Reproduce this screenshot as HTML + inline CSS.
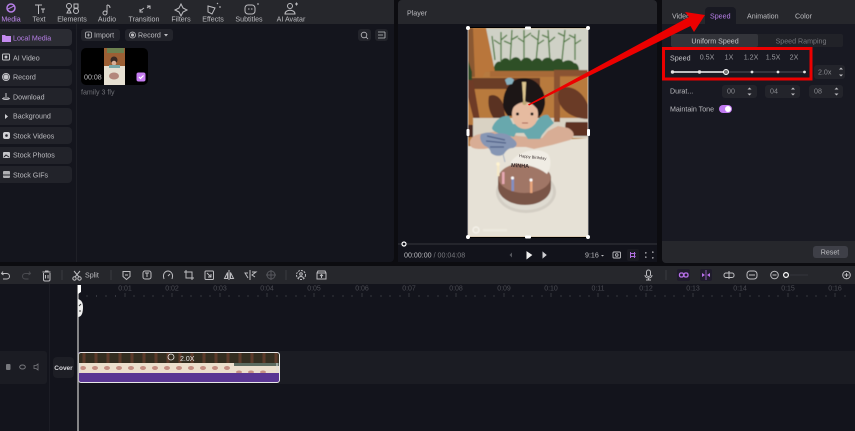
<!DOCTYPE html>
<html><head><meta charset="utf-8">
<style>
html,body{margin:0;padding:0;width:855px;height:431px;overflow:hidden;background:#0c0c10}
#w{position:absolute;left:0;top:0;width:855px;height:431px;overflow:hidden;background:#0c0c10;font-family:"Liberation Sans",sans-serif;font-size:7.1px;color:#bcbcc0;filter:blur(.3px)}
.a{position:absolute}
.t{position:absolute;white-space:nowrap;line-height:10px;transform:translateY(-4.5px)}
.c{transform:translate(-50%,-4.5px)}
.r{color:#4b4c53;font-size:7px}
.side{position:absolute;left:0;width:72px;height:17px;background:#22232a;border-radius:0 4px 4px 0}
.box{position:absolute;background:#23242b;border-radius:3px}
svg{position:absolute;left:0;top:0}
</style></head><body><div id="w">
<!-- panels -->
<div class="a" style="left:0;top:0;width:394px;height:262px;background:#14151d;border-radius:0 0 4px 0"></div>
<div class="a" style="left:0;top:0;width:394px;height:24px;background:#26272c"></div>
<div class="a" style="left:76px;top:24px;width:1px;height:238px;background:#1f2027"></div>
<div class="a" style="left:398px;top:0;width:259px;height:262px;background:#12131b;border-radius:4px 4px 0 0"></div>
<div class="a" style="left:398px;top:0;width:259px;height:24px;background:#26272c;border-radius:4px 4px 0 0"></div>
<div class="a" style="left:398px;top:243px;width:259px;height:2px;background:#24252c"></div>
<div class="a" style="left:662px;top:0;width:193px;height:263px;background:#181922;border-radius:4px 0 0 4px"></div>
<div class="a" style="left:662px;top:0;width:193px;height:24px;background:#26272c"></div>
<div class="a" style="left:662px;top:241px;width:193px;height:22px;background:#26272c;border-radius:0 0 0 4px"></div>
<div class="a" style="left:0;top:266px;width:855px;height:18px;background:#26272c"></div>
<div class="a" style="left:0;top:284px;width:855px;height:147px;background:#13141c"></div>
<div class="a" style="left:49px;top:284px;width:1px;height:147px;background:#1c1d25"></div>
<div class="a" style="left:0;top:351px;width:47px;height:33px;background:#1b1c23;border-radius:0 3px 3px 0"></div>
<div class="a" style="left:278px;top:351px;width:577px;height:33px;background:#1b1c23"></div>

<!-- top tabs -->
<div class="t c" style="left:11px;top:19px;color:#c08bf0">Media</div>
<div class="t c" style="left:39px;top:19px">Text</div>
<div class="t c" style="left:72px;top:19px">Elements</div>
<div class="t c" style="left:107px;top:19px">Audio</div>
<div class="t c" style="left:144px;top:19px">Transition</div>
<div class="t c" style="left:181px;top:19px">Filters</div>
<div class="t c" style="left:213px;top:19px">Effects</div>
<div class="t c" style="left:249px;top:19px">Subtitles</div>
<div class="t c" style="left:291px;top:19px">AI Avatar</div>

<!-- sidebar -->
<div class="side" style="top:29px;background:#2b2c33"></div>
<div class="side" style="top:49px"></div>
<div class="side" style="top:69px"></div>
<div class="side" style="top:88px"></div>
<div class="side" style="top:108px"></div>
<div class="side" style="top:127px"></div>
<div class="side" style="top:147px"></div>
<div class="side" style="top:166px"></div>
<div class="t" style="left:13px;top:38px;color:#b77fe8">Local Media</div>
<div class="t" style="left:13px;top:58px">AI Video</div>
<div class="t" style="left:13px;top:77px">Record</div>
<div class="t" style="left:13px;top:97px">Download</div>
<div class="t" style="left:13px;top:116px">Background</div>
<div class="t" style="left:13px;top:136px">Stock Videos</div>
<div class="t" style="left:13px;top:155px">Stock Photos</div>
<div class="t" style="left:13px;top:175px">Stock GIFs</div>

<!-- media -->
<div class="box" style="left:81px;top:29px;width:39px;height:12px"></div>
<div class="box" style="left:125px;top:29px;width:48px;height:12px"></div>
<div class="t" style="left:94px;top:35px">Import</div>
<div class="t" style="left:138px;top:35px">Record</div>
<div class="box" style="left:358px;top:29px;width:13px;height:12px"></div>
<div class="box" style="left:375px;top:29px;width:13px;height:12px"></div>
<div class="a" style="left:81px;top:48px;width:67px;height:37px;background:#000;border-radius:5px"></div>
<div class="t" style="left:84px;top:77px">00:08</div>
<div class="t" style="left:81px;top:92px;color:#6f7076">family 3 fly</div>

<!-- player text -->
<div class="t" style="left:407px;top:13px">Player</div>
<div class="t" style="left:404px;top:255px">00:00:00 <span style="color:#77787d">/ 00:04:08</span></div>
<div class="t" style="left:585px;top:255px">9:16</div>

<!-- right panel -->
<div class="a" style="left:705px;top:7px;width:31px;height:17px;background:#181922;border-radius:4px 4px 0 0"></div>
<div class="t" style="left:672px;top:16px">Video</div>
<div class="t" style="left:710px;top:16px;color:#b77fe8">Speed</div>
<div class="t" style="left:747px;top:16px">Animation</div>
<div class="t" style="left:795px;top:16px">Color</div>
<div class="a" style="left:671px;top:34px;width:172px;height:13px;background:#212228;border-radius:2px"></div>
<div class="a" style="left:671px;top:34px;width:87px;height:13px;background:#33343a;border-radius:2px"></div>
<div class="t c" style="left:715px;top:41px;color:#c4c4c8">Uniform Speed</div>
<div class="t c" style="left:801px;top:41px;color:#77787d">Speed Ramping</div>
<div class="t" style="left:670px;top:58px;color:#c4c4c8">Speed</div>
<div class="t c" style="left:707px;top:57px;color:#9a9ba0">0.5X</div>
<div class="t c" style="left:729px;top:57px;color:#9a9ba0">1X</div>
<div class="t c" style="left:751px;top:57px;color:#9a9ba0">1.2X</div>
<div class="t c" style="left:773px;top:57px;color:#9a9ba0">1.5X</div>
<div class="t c" style="left:794px;top:57px;color:#9a9ba0">2X</div>
<div class="box" style="left:814px;top:65px;width:31px;height:14px"></div>
<div class="t" style="left:818px;top:72px;color:#8a8b90">2.0x</div>
<div class="t" style="left:670px;top:91px">Durat...</div>
<div class="box" style="left:722px;top:85px;width:35px;height:13px"></div>
<div class="box" style="left:765px;top:85px;width:35px;height:13px"></div>
<div class="box" style="left:809px;top:85px;width:34px;height:13px"></div>
<div class="t" style="left:727px;top:91px;color:#8a8b90">00</div>
<div class="t" style="left:770px;top:91px;color:#8a8b90">04</div>
<div class="t" style="left:814px;top:91px;color:#8a8b90">08</div>
<div class="t" style="left:670px;top:109px">Maintain Tone</div>
<div class="a" style="left:813px;top:246px;width:35px;height:12px;background:#3e3f47;border-radius:3px"></div>
<div class="t c" style="left:830px;top:252px">Reset</div>

<!-- toolbar text -->
<div class="t" style="left:85px;top:275px">Split</div>

<!-- ruler labels -->
<div class="t c r" style="left:125px;top:289px">0:01</div>
<div class="t c r" style="left:172px;top:289px">0:02</div>
<div class="t c r" style="left:220px;top:289px">0:03</div>
<div class="t c r" style="left:267px;top:289px">0:04</div>
<div class="t c r" style="left:314px;top:289px">0:05</div>
<div class="t c r" style="left:362px;top:289px">0:06</div>
<div class="t c r" style="left:409px;top:289px">0:07</div>
<div class="t c r" style="left:456px;top:289px">0:08</div>
<div class="t c r" style="left:504px;top:289px">0:09</div>
<div class="t c r" style="left:551px;top:289px">0:10</div>
<div class="t c r" style="left:598px;top:289px">0:11</div>
<div class="t c r" style="left:646px;top:289px">0:12</div>
<div class="t c r" style="left:693px;top:289px">0:13</div>
<div class="t c r" style="left:740px;top:289px">0:14</div>
<div class="t c r" style="left:788px;top:289px">0:15</div>
<div class="t c r" style="left:835px;top:289px">0:16</div>

<!-- track head -->
<div class="a" style="left:53px;top:357px;width:21px;height:21px;background:#1d1e25;border-radius:4px"></div>

<svg width="855" height="431" viewBox="0 0 855 431" fill="none">
<defs>
<filter id="b"><feGaussianBlur stdDeviation="0.6"/></filter>
<clipPath id="ph"><rect x="468" y="28" width="120" height="209"/></clipPath>
<clipPath id="th"><rect x="104" y="48" width="21" height="37"/></clipPath>
</defs>

<!-- top icons -->
<g stroke="#bdbdc1" stroke-width="1" fill="none">
<circle cx="11" cy="8" r="4" stroke="#b77fe8" stroke-width="1.5"/><path d="M8 9l6-3" stroke="#b77fe8"/>
<path d="M35 5h7M38.500 5v9M41 9h4M43 9v4"/>
<circle cx="69" cy="6" r="2.500"/><rect x="74" y="4" width="4" height="4"/><path d="M67 13l2-4 2 4z"/><circle cx="76" cy="11" r="2.500"/>
<path d="M107 5v8"/><circle cx="105" cy="13" r="2"/><path d="M107 5c2 0 3 1 3 3"/>
<path d="M140 11l4-3M147 8l3-2M140 9v3h3M147 6h3v3" />
<path d="M181 4l2 4 4 2-4 2-2 4-2-4-4-2 4-2z"/>
<path d="M208 6l7 2-3 6-4-2zM217 4l1-1M219 7h2"/>
<rect x="245" y="5" width="10" height="9" rx="3"/><path d="M248 9h1.500M251 9h1.500M257 4h2"/>
<circle cx="290" cy="6" r="2.500"/><path d="M285 14c0-5 10-5 10 0z"/><path d="M295 4h3M296.500 2.500v3"/>
</g>

<!-- sidebar icons -->
<path d="M2 35h3l1 1h5v6H2z" fill="#c48bf0"/>
<g stroke="#c4c4c8" stroke-width="1">
<rect x="2.500" y="54" width="7" height="6" rx="1"/><circle cx="6" cy="57" r="1" fill="#c4c4c8"/>
<circle cx="6" cy="77" r="3.500"/><circle cx="6" cy="77" r="2" fill="#c4c4c8"/>
<path d="M6 93v4M3 98h6" /><path d="M2.500 98c0 2 7 2 7 0"/>
</g>
<path d="M5 114l3 2.500-3 2.500z" fill="#d0d0d4"/>
<rect x="3" y="132" width="7" height="7" rx="2" fill="#d0d0d4"/><circle cx="6.500" cy="135.500" r="1.300" fill="#22232a"/>
<rect x="3" y="152" width="7" height="6" rx="1" fill="#c4c4c8"/><path d="M4 157l2-2 3 2" stroke="#22232a"/>
<rect x="3" y="171" width="7" height="7" rx="1" fill="#b0b0b4"/><path d="M3 175h7" stroke="#22232a"/>

<!-- media controls -->
<g stroke="#bdbdc1" stroke-width="0.8">
<rect x="85.500" y="32" width="6" height="6" rx="1.500"/><path d="M88.500 33.500v3M87 35h3"/>
<circle cx="132.500" cy="35" r="3"/><circle cx="132.500" cy="35" r="1.200" fill="#bdbdc1"/>
<circle cx="364" cy="35" r="2.800"/><path d="M366 37l2 2"/>
<path d="M378 32h7M378 35h5M378 38h7M385 32v6"/>
</g>
<path d="M164 34h4l-2 2.500z" fill="#bdbdc1"/>

<!-- thumbnail -->
<g clip-path="url(#th)">
<rect x="104" y="48" width="21" height="37" fill="#e6e0d2"/>
<rect x="104" y="48" width="21" height="18" fill="#9c5f34"/>
<rect x="107" y="48" width="17" height="5" fill="#6d8150"/>
<circle cx="114" cy="60" r="3.500" fill="#3a2a24"/><circle cx="114" cy="63" r="2.300" fill="#d9ae96"/><rect x="109" y="65" width="11" height="3" fill="#7aa6a6"/>
<ellipse cx="114" cy="76" rx="5" ry="3.500" fill="#b3877c"/>
</g>
<rect x="136.500" y="72.500" width="9" height="9" rx="2" fill="#c77df2"/>
<path d="M139 77l1.500 1.500 3-3" stroke="#fff" stroke-width="1.200"/>

<!-- photo -->
<g clip-path="url(#ph)">
<rect x="468" y="28" width="120" height="209" fill="#b67a40"/>
<g filter="url(#b)">
<!-- bamboo wall -->
<rect x="486" y="28" width="102" height="44" fill="#cfd1c6"/>
<g stroke="#4f7a42" stroke-width="1.300">
<path d="M495 60l-3-24M501 62V32M500 44l-6-4M501 40l6-5M510 64l2-34M511 44l-7-3M511 40l7-4M524 62V30M524 42l-6-4M524 38l7-5M536 62l3-32M538 44l6-4M538 40l-7-5M550 62l-2-32M549 42l6-5M549 38l-7-3M562 60l3-30M564 42l6-4M564 36l-6-3M575 60V34M575 44l6-4M575 38l-6-3"/>
</g>
<path d="M494 72c-1-7 3-12 7-10 1-5 7-5 9-1 3-5 9-5 11 0 3-5 9-4 11 0 3-4 8-4 10 0 3-5 9-4 11 0 4-4 9-3 10 1 4-3 9-2 11 1 3 0 5 3 5 7v2z" fill="#2f4f26"/>
<!-- wood -->
<path d="M468 28h18l9 44h-10l-3 6h-14z" fill="#b9763a"/>
<path d="M468 28h5l2 50h-7z" fill="#8a5830"/>
<rect x="490" y="71" width="98" height="6" fill="#a86a38"/>
<rect x="468" y="77" width="120" height="42" fill="#b87a3e"/>
<path d="M468 60l4 12v20l-4 0z" fill="#2f4a26"/>
<!-- left chair -->
<rect x="472" y="78" width="68" height="11" fill="#6b3c28"/>
<path d="M468 80h5l9 52h-5l-9-35z" fill="#6e3a26"/>
<path d="M535 78h5v40h-5z" fill="#6b3c28"/>
<path d="M489 96c6-3 12 2 14 8l3 17h-10c-6-6-9-16-7-25z" fill="#5a3022"/>
<!-- floor -->
<rect x="473" y="118" width="115" height="20" fill="#d9d2c3"/>
<!-- right chair -->
<path d="M554 70h34v6h-28v46h-6z" fill="#8a5230"/>
<path d="M565 87c10 0 18 6 23 18v14c-16 0-30-10-30-23 0-5 3-9 7-9z" fill="#6a3a26"/>
<path d="M566 122h22v14h-16c-6-2-8-10-6-14z" fill="#5e3322"/>
<path d="M468 125h5v12h-5z" fill="#4a2a20"/>
<!-- table -->
<path d="M468 146h120v91H468z" fill="#e6e1d6"/>
<path d="M480 150c30-8 80-10 108-12v12h-108z" fill="#e6e1d6"/>
<!-- arms -->
<path d="M470 145c-2-5 3-10 10-11l18-3 20 5 24 2 6-7 10-5 10 2c6 3 8 8 2 12l-18 5-18 4-8-2-30 0-12 2c-8 0-12 0-14-4z" fill="#d8ad95"/>
<!-- dress -->
<path d="M492 128c3-8 10-13 17-12l4 8h22c3-6 8-10 13-9l6 8-7 6-5 6-2 4-10 0-2 0-4-6h-8l-2 4-8-2-6-1c-5-2-8-4-8-6z" fill="#67a8ad"/>
<!-- hair and face -->
<path d="M503 104c0-15 9-26 21-26s22 11 21 26c-1 6-3 10-5 12h-32c-3-3-5-8-5-12z" fill="#1b1518"/>
<path d="M512 114c0-8 5-12 13-12s13 4 13 12c0 9-6 15-13 15s-13-6-13-15z" fill="#e6bba0"/>
<path d="M511 110c3-4 8-8 14-8s10 4 13 8l0-7-13-4-14 4z" fill="#1b1518"/>
<circle cx="517.500" cy="114" r="1.500" fill="#1a1214"/><circle cx="532" cy="114" r="1.500" fill="#1a1214"/>
<path d="M522 123h6" stroke="#a75a50" stroke-width="1"/>
<path d="M522 82l1.300 20h1.800l1-20z" fill="#dcc48e"/><circle cx="524.500" cy="103" r="2" fill="#bba874"/>
<path d="M505 80c2-3 7-3 9 0l-2 4-5 1z" fill="#87b2c0"/>
<!-- topper -->
<path d="M481 134c6-2 10-2 14 0 7-2 14 0 17 4 6 4 6 8 1 10-5 0-7 3-9 6-4 3-10 2-13-1-1-4-3-6-6-7-4-3-6-8-4-12z" fill="#8696b4"/>
<path d="M487 136l18 4M486 141l20 2M490 147l14 0" stroke="#4f6188" stroke-width="1.200"/>
<path d="M503 154l2 8" stroke="#a9b4c4" stroke-width="1"/>
<!-- plate -->
<ellipse cx="526" cy="192" rx="30" ry="21" fill="#d3cec4"/>
<ellipse cx="526" cy="192" rx="27" ry="18" fill="#dfdbd1"/>
<!-- cake -->
<path d="M498 178c1-8 12-14 27-14s26 6 26 14v9c0 10-11 18-26 18s-27-8-27-18z" fill="#7a5446"/>
<ellipse cx="524.500" cy="178" rx="26" ry="15" fill="#a07666"/>
<path d="M510 163c6-10 26-18 38-9 4 6 3 14-1 20-10-8-24-10-37-11z" fill="#f0ece4"/>
<rect x="497" y="164" width="2.500" height="12" fill="#f5e8c8"/><rect x="502" y="172" width="2.500" height="12" fill="#e7a9b3"/>
<rect x="511.500" y="178" width="2.500" height="13" fill="#8090c4"/><rect x="530" y="180" width="2.500" height="13" fill="#e8a57c"/>
<circle cx="498" cy="164" r="1.800" fill="#fff3d0"/><circle cx="512.500" cy="178" r="1.500" fill="#fff"/><circle cx="531" cy="180" r="1.500" fill="#fff"/>
<!-- watermark -->
<circle cx="476" cy="230" r="3" stroke="#f6f3ec" stroke-width="1.200"/><rect x="483" y="229" width="24" height="2.500" fill="#ece8de"/>
</g>
<text x="519" y="157" font-family="Liberation Sans" font-size="4" fill="#3a3030" transform="rotate(6 519 157)">Happy Birthday</text>
<text x="511" y="167" font-family="Liberation Sans" font-size="5.500" font-weight="bold" fill="#3a3030" transform="rotate(3 511 167)">MiNHA</text>
</g>

<!-- photo handles -->
<path d="M468 27.500h120M468 237.500h120" stroke="#000" stroke-width="1"/>
<path d="M468 28v209M588 28v209" stroke="#e8e8e8" stroke-width="0.700"/>
<g fill="#fff">
<circle cx="468" cy="28" r="2"/><circle cx="588" cy="28" r="2"/><circle cx="468" cy="237" r="2"/><circle cx="588" cy="237" r="2"/>
<rect x="525" y="26.500" width="6" height="3" rx="1"/><rect x="525" y="235.500" width="6" height="3" rx="1"/>
<rect x="466.500" y="129" width="3" height="7" rx="1"/><rect x="587" y="129" width="3" height="7" rx="1"/>
</g>

<!-- player controls -->
<circle cx="404" cy="244" r="2" fill="#12131b" stroke="#fff" stroke-width="1.200"/>
<path d="M512 252.500v5l-2.500-2.500z" fill="#55565c"/>
<path d="M527 252l4.500 3-4.500 3.500z" fill="#f0f0f0" stroke="#f0f0f0"/>
<path d="M543 252.500l3 2.500-3 2.500z" fill="#cfcfd3" stroke="#cfcfd3"/>
<path d="M601 255h3l-1.500 1.500z" fill="#bdbdc1"/>
<g stroke="#bdbdc1" stroke-width="0.900">
<rect x="613" y="252" width="7.500" height="6" rx="1"/><circle cx="616.800" cy="255" r="1.300"/>
<path d="M646 252v1h-1M652 252h1v1M645 257h1v1M653 257v1h-1"/>
</g>
<rect x="627" y="249" width="12" height="12" rx="2" fill="#1a1b22"/>
<path d="M630.500 252v6M634.500 252v6M630 253.500h5.500M630 256.500h5.500" stroke="#b070e0" stroke-width="1"/>

<!-- slider & right panel -->
<path d="M672 72h132" stroke="#50515a" stroke-width="1"/>
<path d="M672 72h54" stroke="#f4f4f4" stroke-width="1.500"/>
<g fill="#e4e4e4"><circle cx="672.500" cy="72" r="1.700"/><circle cx="699.500" cy="72" r="1.700"/><circle cx="752" cy="72" r="1.400"/><circle cx="778" cy="72" r="1.400"/><circle cx="804.500" cy="72" r="1.400"/></g>
<circle cx="726" cy="72" r="2.500" fill="#777" stroke="#fff" stroke-width="1"/>
<g fill="#bdbdc1">
<path d="M839 69.500l2 -2 2 2zM839 74.500l2 2 2-2z"/>
<path d="M747.500 89.500l2-2 2 2zM747.500 93.500l2 2 2-2z"/>
<path d="M791 89.500l2-2 2 2zM791 93.500l2 2 2-2z"/>
<path d="M834.500 89.500l2-2 2 2zM834.500 93.500l2 2 2-2z"/>
</g>
<rect x="719" y="105" width="13" height="8" rx="4" fill="#c07af0"/><circle cx="728" cy="109" r="3" fill="#fff"/>

<!-- toolbar icons -->
<g stroke="#bdbdc1" stroke-width="1" fill="none">
<path d="M3 271.500l-1.500 2 2 1.500M1.500 273.500h5c4 0 4 5.500 0 5.500H3"/>
<path d="M29 271.500l1.500 2-2 1.500M30.500 273.500h-5c-4 0-4 5.500 0 5.500h3" stroke="#4a4b50"/>
<path d="M42.500 272h8M43.500 273v6.500c0 1 .5 1.500 1.500 1.500h3.500c1 0 1.500-.5 1.500-1.500V273M45 271h3.500M45.500 275v3.500M48 275v3.500"/>
<path d="M62 270v10" stroke="#3a3b41"/>
<circle cx="74.500" cy="278.500" r="1.700"/><circle cx="79.500" cy="278.500" r="1.700"/><path d="M75 277l5-6M79 277l-5-6"/>
<path d="M111 270v10" stroke="#3a3b41"/>
<path d="M123 271.500h7v5l-3.500 3-3.500-3zM125 275h3"/>
<rect x="143" y="271" width="8" height="8" rx="2"/><path d="M145 273h4M147 273v4"/>
<path d="M164 279c-2-6 2-8 4-8s6 2 4 8M168 276l2-2"/>
<path d="M186 270v8h8M184 272h8v8"/>
<rect x="205" y="271" width="8.500" height="8.500" rx="1"/><path d="M207 273l4 4M211 274v3h-3"/>
<path d="M229 270v10M227.500 272.500l-3 6h3zM230.500 272.500l3 6h-3z"/>
<path d="M250 270v10M248 273h-3l3 5M252 272h4l-4 3 3 2"/>
<g stroke="#55565c"><circle cx="271" cy="275" r="4"/><path d="M271 270v10M266 275h10"/></g>
<path d="M286 270v10" stroke="#3a3b41"/>
<circle cx="301" cy="275" r="4.500" stroke-dasharray="2 1"/><circle cx="301" cy="274" r="1.300"/><path d="M298.500 278c1-2 4-2 5 0"/>
<path d="M317 273l1-2h7l1 2v6h-9zM317 273h9M321.500 278v-3M320 276l1.500-1.500 1.500 1.500"/>
<rect x="646.500" y="270" width="4" height="6.500" rx="2"/><path d="M645 275c0 4 7 4 7 0M648.500 278v2M646 280h5"/>
<path d="M666 270v10" stroke="#3a3b41"/>
</g>
<rect x="677" y="269" width="13" height="12" rx="2" fill="#1f1c2b"/>
<rect x="700" y="269" width="12" height="12" rx="2" fill="#1f1c2b"/>
<g stroke="#b870ea" stroke-width="1.300" fill="none">
<rect x="679.500" y="273" width="4" height="4" rx="1.500"/><rect x="684" y="273" width="4" height="4" rx="1.500"/>
</g>
<path d="M702 273l3 2-3 2zM710 273l-3 2 3 2z" fill="#b870ea"/><path d="M706 270v10" stroke="#b870ea" stroke-width=".7"/>
<g stroke="#bdbdc1" stroke-width="1" fill="none">
<rect x="724" y="273" width="10" height="4.500" rx="2"/><path d="M729 271v8"/>
<rect x="747" y="271" width="10" height="8" rx="3"/><path d="M749 275h6"/>
<circle cx="774.500" cy="275" r="3.800"/><path d="M772.500 275h4"/>
<path d="M790 275h18" stroke="#34353b"/>
<circle cx="786" cy="275" r="2.400" fill="#26272c" stroke="#fff" stroke-width="1.200"/>
<circle cx="846.500" cy="275" r="3.800"/><path d="M844.500 275h4M846.500 273v4"/>
</g>

<!-- ruler ticks -->
<path transform="translate(0,-2)" d="M87 297v2M96.500 297v2M106 297v2M115.500 297v2M125 295v4M134 297v2M144 297v2M153 297v2M163 297v2M172 295v4M182 297v2M191 297v2M201 297v2M210 297v2M220 295v4M229 297v2M239 297v2M248 297v2M258 297v2M267 295v4M277 297v2M286 297v2M296 297v2M305 297v2M314 295v4M324 297v2M333 297v2M343 297v2M352 297v2M362 295v4M371 297v2M381 297v2M390 297v2M400 297v2M409 295v4M419 297v2M428 297v2M438 297v2M447 297v2M456 295v4M466 297v2M475 297v2M485 297v2M494 297v2M504 295v4M513 297v2M523 297v2M532 297v2M542 297v2M551 295v4M561 297v2M570 297v2M580 297v2M589 297v2M598 295v4M608 297v2M617 297v2M627 297v2M636 297v2M646 295v4M655 297v2M665 297v2M674 297v2M684 297v2M693 295v4M703 297v2M712 297v2M722 297v2M731 297v2M740 295v4M750 297v2M759 297v2M769 297v2M778 297v2M788 295v4M797 297v2M807 297v2M816 297v2M826 297v2M835 295v4M845 297v2" stroke="#3f4047" stroke-width=".8"/>

<!-- track head icons -->
<rect x="6" y="364" width="4.500" height="6" rx="1" fill="#77787d"/>
<ellipse cx="22.500" cy="367" rx="2.800" ry="2" stroke="#77787d"/>
<path d="M34 365.500h2l2-1.500v6l-2-1.500h-2z" stroke="#77787d" stroke-width=".8"/>

<!-- clip -->
<rect x="78" y="352" width="201" height="30" rx="2" fill="#5a3693"/>
<rect x="78" y="353" width="201" height="10" fill="#332d20"/>
<path d="M84 353v10M96 353v10M108 353v10M120 353v10M132 353v10M144 353v10M156 353v10M168 353v10M180 353v10M192 353v10M204 353v10M216 353v10M228 353v10M240 353v10M252 353v10M264 353v10M276 353v10" stroke="#5c3a2a" stroke-width="3"/>
<rect x="78" y="363" width="201" height="10" fill="#ecdfcd"/>
<g fill="#c58f84"><ellipse cx="83" cy="368" rx="3" ry="2"/><ellipse cx="95" cy="368" rx="3" ry="2"/><ellipse cx="107" cy="368" rx="3" ry="2"/><ellipse cx="119" cy="368" rx="3" ry="2"/><ellipse cx="131" cy="368" rx="3" ry="2"/><ellipse cx="143" cy="368" rx="3" ry="2"/><ellipse cx="155" cy="368" rx="3" ry="2"/><ellipse cx="167" cy="368" rx="3" ry="2"/><ellipse cx="179" cy="368" rx="3" ry="2"/><ellipse cx="191" cy="368" rx="3" ry="2"/><ellipse cx="203" cy="368" rx="3" ry="2"/><ellipse cx="215" cy="368" rx="3" ry="2"/><ellipse cx="227" cy="368" rx="3" ry="2"/><ellipse cx="239" cy="372" rx="3" ry="1.500"/><ellipse cx="251" cy="372" rx="3" ry="1.500"/><ellipse cx="263" cy="372" rx="3" ry="1.500"/></g>
<path d="M234 363h45v3h-45z" fill="#5c6b60"/>
<rect x="78" y="373" width="201" height="9" fill="#5a3693"/>
<rect x="78.500" y="352.500" width="201" height="30" rx="2.500" stroke="#e8e8e8" stroke-width="1"/>
<circle cx="171" cy="357" r="3" stroke="#e8e8e8" stroke-width=".8"/>
<path d="M80 363v9M277 363v9" stroke="#ddd" stroke-width="1"/>
<text x="180" y="361" font-family="Liberation Sans" font-size="7" fill="#e4e4e4">2.0X</text>
<text x="63.500" y="370" text-anchor="middle" font-family="Liberation Sans" font-size="6.500" font-weight="bold" fill="#d8d8dc">Cover</text>

<!-- playhead -->
<path d="M78 285v146" stroke="#aaa" stroke-width="1.500"/>
<path d="M78 285h3v7l-3 2z" fill="#fff"/>
<path d="M78 299c3 1 5 3 5 8s-1 10-5 10z" fill="#eee"/>
<path d="M79 306l2-2M79 311h2" stroke="#333"/>

<!-- red annotation -->
<rect x="663.500" y="48.500" width="147.500" height="30.500" stroke="#ec0000" stroke-width="3"/>
<path d="M528 104.500L689 17l-4-5 20 3-11 17-3.500-6L529 105.500z" fill="#ec0000"/>
</svg>
</div></body></html>
